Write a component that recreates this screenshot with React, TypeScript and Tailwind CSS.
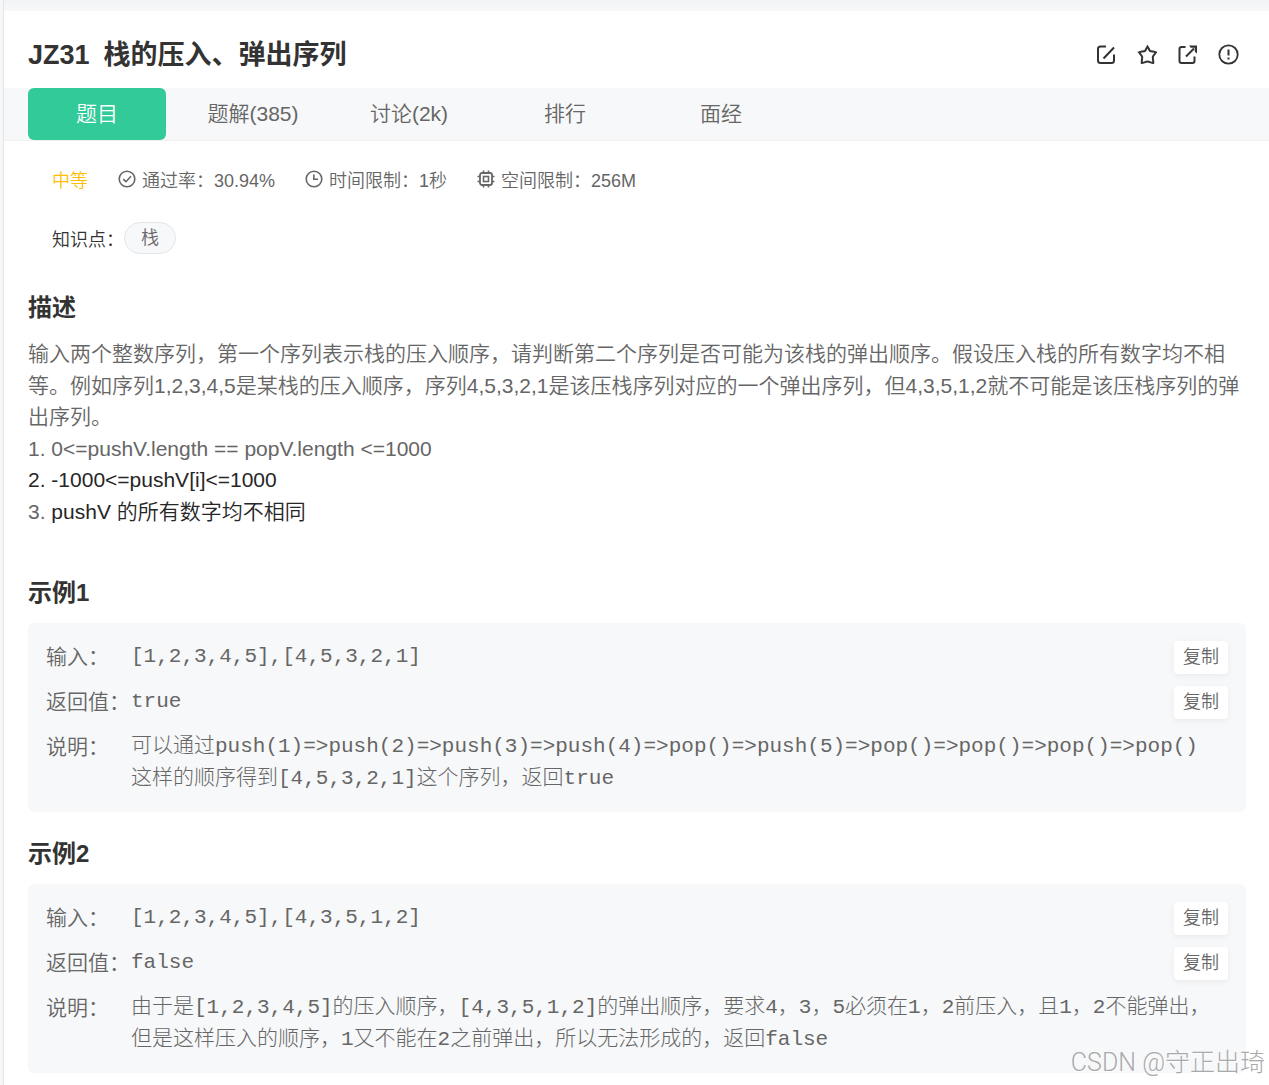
import React from "react";

type Example = { title: string; input: string; output: string; note: string };

const TABS = ["题目", "题解(385)", "讨论(2k)", "排行", "面经"];

const EXAMPLES: Example[] = [
  {
    title: "示例1",
    input: "[1,2,3,4,5],[4,5,3,2,1]",
    output: "true",
    note: "可以通过push(1)=>push(2)=>push(3)=>push(4)=>pop()=>push(5)=>pop()=>pop()=>pop()=>pop()\n这样的顺序得到[4,5,3,2,1]这个序列，返回true",
  },
  {
    title: "示例2",
    input: "[1,2,3,4,5],[4,3,5,1,2]",
    output: "false",
    note: "由于是[1,2,3,4,5]的压入顺序，[4,3,5,1,2]的弹出顺序，要求4，3，5必须在1，2前压入，且1，2不能弹出，\n但是这样压入的顺序，1又不能在2之前弹出，所以无法形成的，返回false",
  },
];

export default function App() {
  return (
    <div className="relative flex min-h-screen bg-[#f7f7f7] font-['Liberation_Sans','Noto_Sans_CJK_SC',sans-serif] font-[350] text-[#666]">
      <main className="ml-[3px] min-w-0 flex-1 border-l border-[#e4e4e4] bg-white pb-3">
        <div className="h-[11px] bg-gradient-to-b from-[#f3f4f6] to-[#f7f8f9]" />
        <header className="flex h-[77px] items-center justify-between pt-3 pr-[30px] pl-6">
          <h1 className="flex gap-[14px] text-[27px] font-bold text-[#333]">
            <span>JZ31</span>
            <span>栈的压入、弹出序列</span>
          </h1>
          <div className="flex items-center gap-5 pb-[3px] text-[#333]">
            <IconBtn label="笔记">
              <path d="M11 2.500H5.500Q3 2.500 3 5V16.500Q3 19 5.500 19H16.500Q19 19 19 16.500V10.500M8.500 14.500L19 3.500" />
            </IconBtn>
            <IconBtn label="收藏">
              <path d="M11.500 2.500C12.700 4.300 13.200 6 13.900 6.800C15 7.500 18.300 7.600 20 8.300C19 9.900 17 11.500 16.800 13C16.700 14.500 17.500 17 17.200 19C15.500 19 13.500 17.600 11.500 17.600C9.500 17.600 7.500 19 5.800 19C5.500 17 6.300 14.500 6.200 13C6 11.500 4 9.900 3 8.300C4.700 7.600 8 7.500 9.100 6.800C9.800 6 10.300 4.300 11.500 2.500Z" />
            </IconBtn>
            <IconBtn label="分享">
              <path d="M8.500 3H4.500Q2.500 3 2.500 5V17Q2.500 19 4.500 19H15.500Q17.500 19 17.500 17V12.500M9 12.500L17 4.500" />
              <path d="M12 1.500H20V9.500L17.800 7.800V3.700H13.700Z" fill="currentColor" stroke="none" />
            </IconBtn>
            <IconBtn label="反馈">
              <circle cx="10.500" cy="10.500" r="9.200" strokeWidth={1.800} />
              <path d="M10.500 5.500V11.500M10.500 13.500V15.500" />
            </IconBtn>
          </div>
        </header>

        <nav className="flex gap-[18px] border-b border-[#f0f0f0] bg-[#f7f8f9] pl-6 text-[21px]">
          {TABS.map((t, i) => (
            <button key={t} className={i === 0 ? "h-[52px] w-[138px] rounded-md bg-[#32ca99] text-white" : "h-[52px] w-[138px]"}>{t}</button>
          ))}
        </nav>

        <div className="flex items-center gap-[30px] pt-[27px] pl-12 text-lg leading-[27px]">
          <span className="text-[#ffbe00]">中等</span>
          <Meta text="通过率：30.94%">
            <circle cx="9" cy="9" r="7.800" />
            <path d="M5.200 9.200L8 11.700L13 6.300" />
          </Meta>
          <Meta text="时间限制：1秒">
            <circle cx="9" cy="9" r="7.800" />
            <path d="M8.800 4.500V9.300H13" />
          </Meta>
          <Meta text="空间限制：256M">
            <rect x="3" y="3" width="12" height="12" rx="2" strokeWidth={1.800} />
            <rect x="6.500" y="6.500" width="5" height="5" />
            <path d="M6.500 0.500V3M11.500 0.500V3M6.500 15V17.500M11.500 15V17.500M0.500 6.500H3M0.500 11.500H3M15 6.500H17.500M15 11.500H17.500" />
          </Meta>
        </div>
        <div className="flex items-center pt-[27px] pl-12 text-lg">
          <span className="pt-1 text-[#333]">知识点：</span>
          <a href="#stack" className="rounded-full border border-[#e4e6eb] bg-[#f7f8f9] px-4 leading-[30px]">栈</a>
        </div>

        <div className="pt-9 pr-[23px] pl-6">
          <section className="mb-12">
            <Heading>描述</Heading>
            <div className="text-[21px] leading-normal">
              <p>
                输入两个整数序列，第一个序列表示栈的压入顺序，请判断第二个序列是否可能为该栈的弹出顺序。假设压入栈的所有数字均不相等。例如序列1,2,3,4,5是某栈的压入顺序，序列4,5,3,2,1是该压栈序列对应的一个弹出序列，但4,3,5,1,2就不可能是该压栈序列的弹出序列。
              </p>
              <p>1. 0&lt;=pushV.length == popV.length &lt;=1000</p>
              <p className="text-[#262626]">2. -1000&lt;=pushV[i]&lt;=1000</p>
              <p>3. <span className="text-[#262626]">pushV 的所有数字均不相同</span></p>
            </div>
          </section>
          {EXAMPLES.map(e => (
            <section key={e.title} className="mb-6 last:mb-0">
              <Heading>{e.title}</Heading>
              <div className="flex flex-col gap-3 rounded-md bg-[#f7f8f9] p-[18px] text-[21px] leading-normal">
                <Row label="输入：" value={e.input} copy />
                <Row label="返回值：" value={e.output} copy />
                <Row label="说明：" value={e.note} />
              </div>
            </section>
          ))}
        </div>
      </main>
      <span className="absolute right-1 bottom-2 font-[Roboto,'Noto_Sans_CJK_SC',sans-serif] text-[25px] leading-7 font-light text-[#aaa] [text-shadow:1px_1px_1px_#fff]">CSDN @守正出琦</span>
    </div>
  );
}

function Heading({ children }: { children: React.ReactNode }) {
  return <h2 className="mb-3 text-2xl leading-9 font-bold text-[#333]">{children}</h2>;
}

function Row({ label, value, copy }: { label: string; value: string; copy?: boolean }) {
  // notes carry their own line breaks, so each line is its own block
  return (
    <div className="flex items-start">
      <span className="w-[85px] shrink-0 whitespace-nowrap">{label}</span>
      <div className="min-w-0 flex-1 font-['Liberation_Mono','Noto_Sans_CJK_SC',monospace] font-light">
        {value.split("\n").map(line => <p key={line}>{line}</p>)}
      </div>
      {copy && <button className="h-[33px] shrink-0 rounded-sm bg-white px-[9px] pb-0.5 text-lg leading-none shadow-[0_2px_6px_rgba(0,0,0,0.06)]">复制</button>}
    </div>
  );
}

function Meta({ text, children }: { text: string; children: React.ReactNode }) {
  return (
    <span className="flex items-center gap-1.5">
      <svg className="mb-1.5 size-[18px]" viewBox="0 0 18 18" fill="none" stroke="currentColor" strokeWidth={1.6}>{children}</svg>
      {text}
    </span>
  );
}

function IconBtn({ label, children }: { label: string; children: React.ReactNode }) {
  return (
    <button aria-label={label}>
      <svg className="size-[21px]" viewBox="0 0 21 21" fill="none" stroke="currentColor" strokeWidth={2}>{children}</svg>
    </button>
  );
}
